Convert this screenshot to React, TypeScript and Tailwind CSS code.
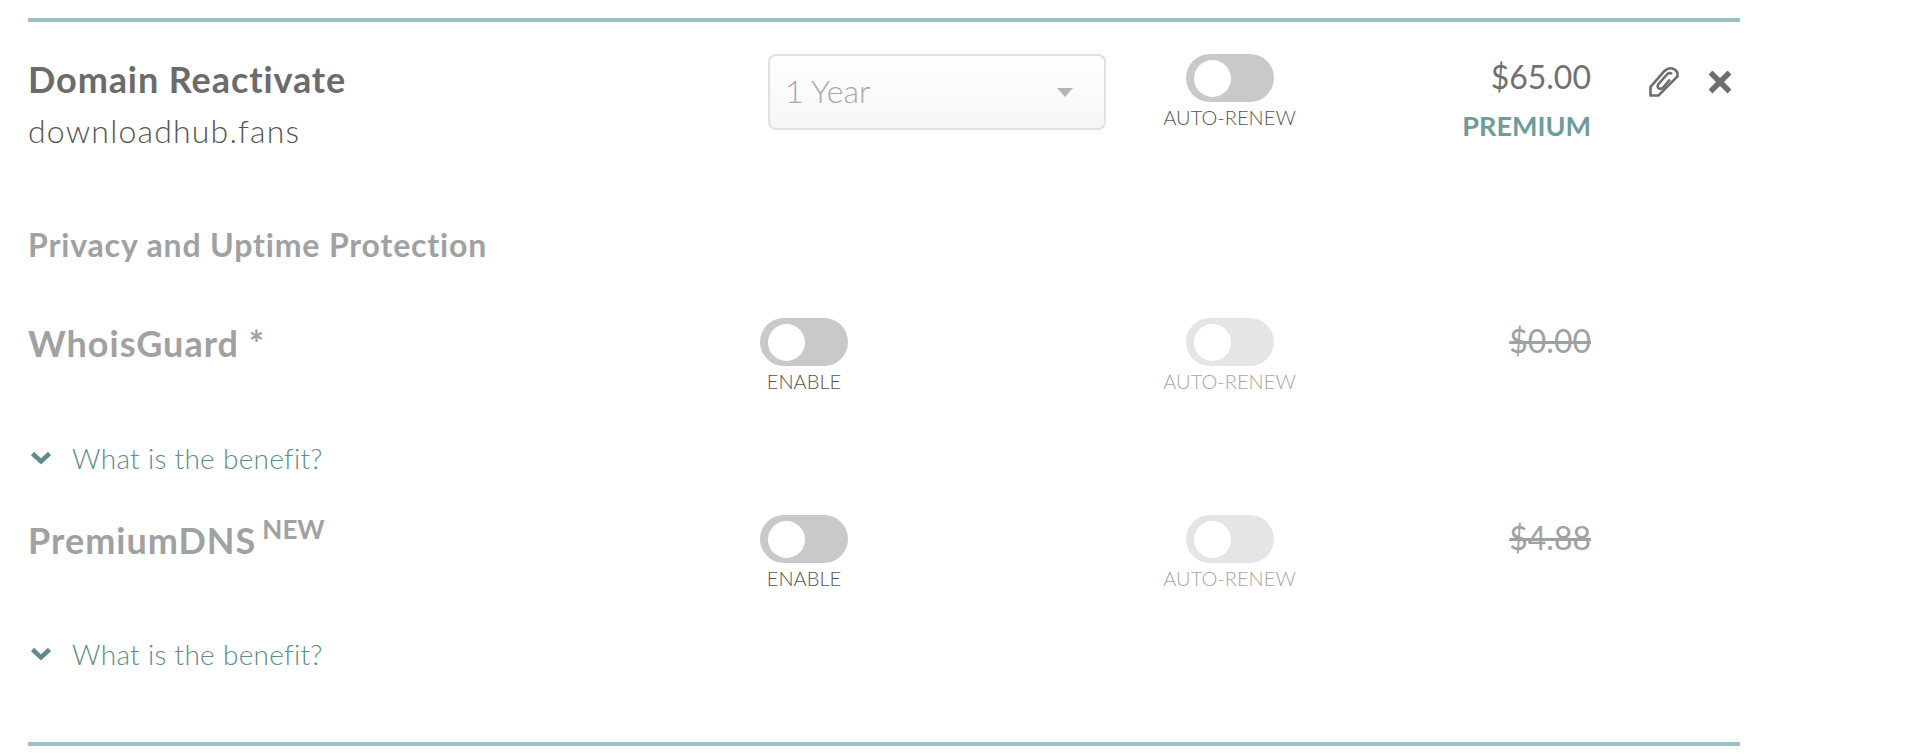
import clsx from "clsx";

const rowGrid = "grid grid-cols-[732px_403px_133px_295px_1fr]";

const Toggle = ({ label, faded }: { label: string; faded?: boolean }) => (
  <div className="inline-flex flex-col items-center">
    <div
      className={clsx(
        "flex h-[48px] w-[88px] items-center rounded-full pl-[8px]",
        faded ? "bg-[#e5e5e5]" : "bg-[#c9c9c9]"
      )}
    >
      <div className="h-[37px] w-[37px] rounded-full bg-white" />
    </div>
    <span
      className={clsx(
        "mt-[3px] text-[20px] leading-[24px] font-light tracking-[0.05px] whitespace-nowrap",
        faded ? "text-[#a5a5a5]" : "text-[#555555]"
      )}
    >
      {label}
    </span>
  </div>
);

const Benefit = () => (
  <div className="flex items-center text-[#5f8c8b]">
    <div className="w-[44px] pl-[2px]">
      <svg width="22" height="14" viewBox="0 0 22 14" fill="none" stroke="currentColor" strokeWidth="4.5">
        <path d="M2.5 2.5 L11 10.5 L19.5 2.5" />
      </svg>
    </div>
    <span className="text-[28px] leading-[32px] font-light tracking-[0.3px]">What is the benefit?</span>
  </div>
);

const Addon = ({ name, price, isNew }: { name: string; price: string; isNew?: boolean }) => (
  <div className={rowGrid}>
    <div className="pt-[3px] text-[36px] leading-[44px] font-bold tracking-[1px] text-[#a0a1a2]">
      {name}
      {isNew && (
        <sup className="top-[-15px] ml-[6px] text-[26px] leading-none font-bold tracking-normal">NEW</sup>
      )}
    </div>
    <div className="justify-self-start">
      <Toggle label="ENABLE" />
    </div>
    <div className="justify-self-center">
      <Toggle label="AUTO-RENEW" faded />
    </div>
    <div className="text-right text-[32px] leading-[46px] text-[#a0a1a2] line-through">
      {price}
    </div>
  </div>
);

const App = () => {
  return (
    <div className="h-[754px] bg-white pt-[18px] font-['Lato','Noto_Sans',sans-serif]">
      <div className="ml-[28px] h-[728px] w-[1712px] border-y-4 border-[#99c1c1]">
        <div className={clsx(rowGrid, "pt-[32px]")}>
          <div className="text-[#6b6b6b]">
            <div className="text-[36px] leading-[50px] font-bold tracking-[0.9px]">Domain Reactivate</div>
            <div className="mt-[8px] text-[32px] leading-[38px] font-light tracking-[1.2px] text-[#555]">downloadhub.fans</div>
          </div>
          <div className="pl-[8px]">
            <div className="flex h-[76px] w-[338px] items-center justify-between rounded-[8px] border-[2px] border-[#e0e0e0] bg-linear-to-b from-white to-[#f6f6f6] pr-[31px] pl-[15px]">
              <span className="-translate-y-px text-[32px] font-light text-[#a8a8a8]">1 Year</span>
              <span className="h-0 w-0 border-x-[8px] border-t-[9px] border-x-transparent border-t-[#b5b5b5]" />
            </div>
          </div>
          <div className="justify-self-center">
            <Toggle label="AUTO-RENEW" />
          </div>
          <div className="text-right">
            <div className="text-[32px] leading-[46px] text-[#707070]">$65.00</div>
            <div className="mt-[4px] text-[27px] leading-[44px] font-bold text-[#6f9b9a]">PREMIUM</div>
          </div>
          <div className="flex items-start gap-[28px] pt-[12px] pl-[57px] text-[#6e6e6e]">
            <svg width="32" height="32" viewBox="0 0 32 32" fill="none" stroke="currentColor" strokeWidth="2.6" className="shrink-0">
              <path d="M2.5 29.5 V21 L16 5.5 Q20 1.5 24.5 2.5 Q30.5 4.5 29.5 10.5 L10.5 29.5 Z" />
              <path d="M24 8 Q21.5 6 19.5 8 L10.5 18 Q8.5 21 11 22.5 Q13 23.5 15 21.5 L22 13.5" />
            </svg>
            <svg width="24" height="24" viewBox="0 0 24 24" fill="none" stroke="currentColor" strokeWidth="5.5" className="mt-[4px] shrink-0">
              <path d="M2.5 2.5 L21.5 21.5 M21.5 2.5 L2.5 21.5" />
            </svg>
          </div>
        </div>

        <div className="mt-[75px] text-[32px] leading-[40px] font-bold tracking-[0.85px] text-[#a0a1a2]">
          Privacy and Uptime Protection
        </div>

        <div className="mt-[53px]">
          <Addon name="WhoisGuard *" price="$0.00" />
        </div>
        <div className="mt-[49px]">
          <Benefit />
        </div>
        <div className="mt-[41px]">
          <Addon name="PremiumDNS" price="$4.88" isNew />
        </div>
        <div className="mt-[48px]">
          <Benefit />
        </div>
      </div>
    </div>
  );
};

export default App;
